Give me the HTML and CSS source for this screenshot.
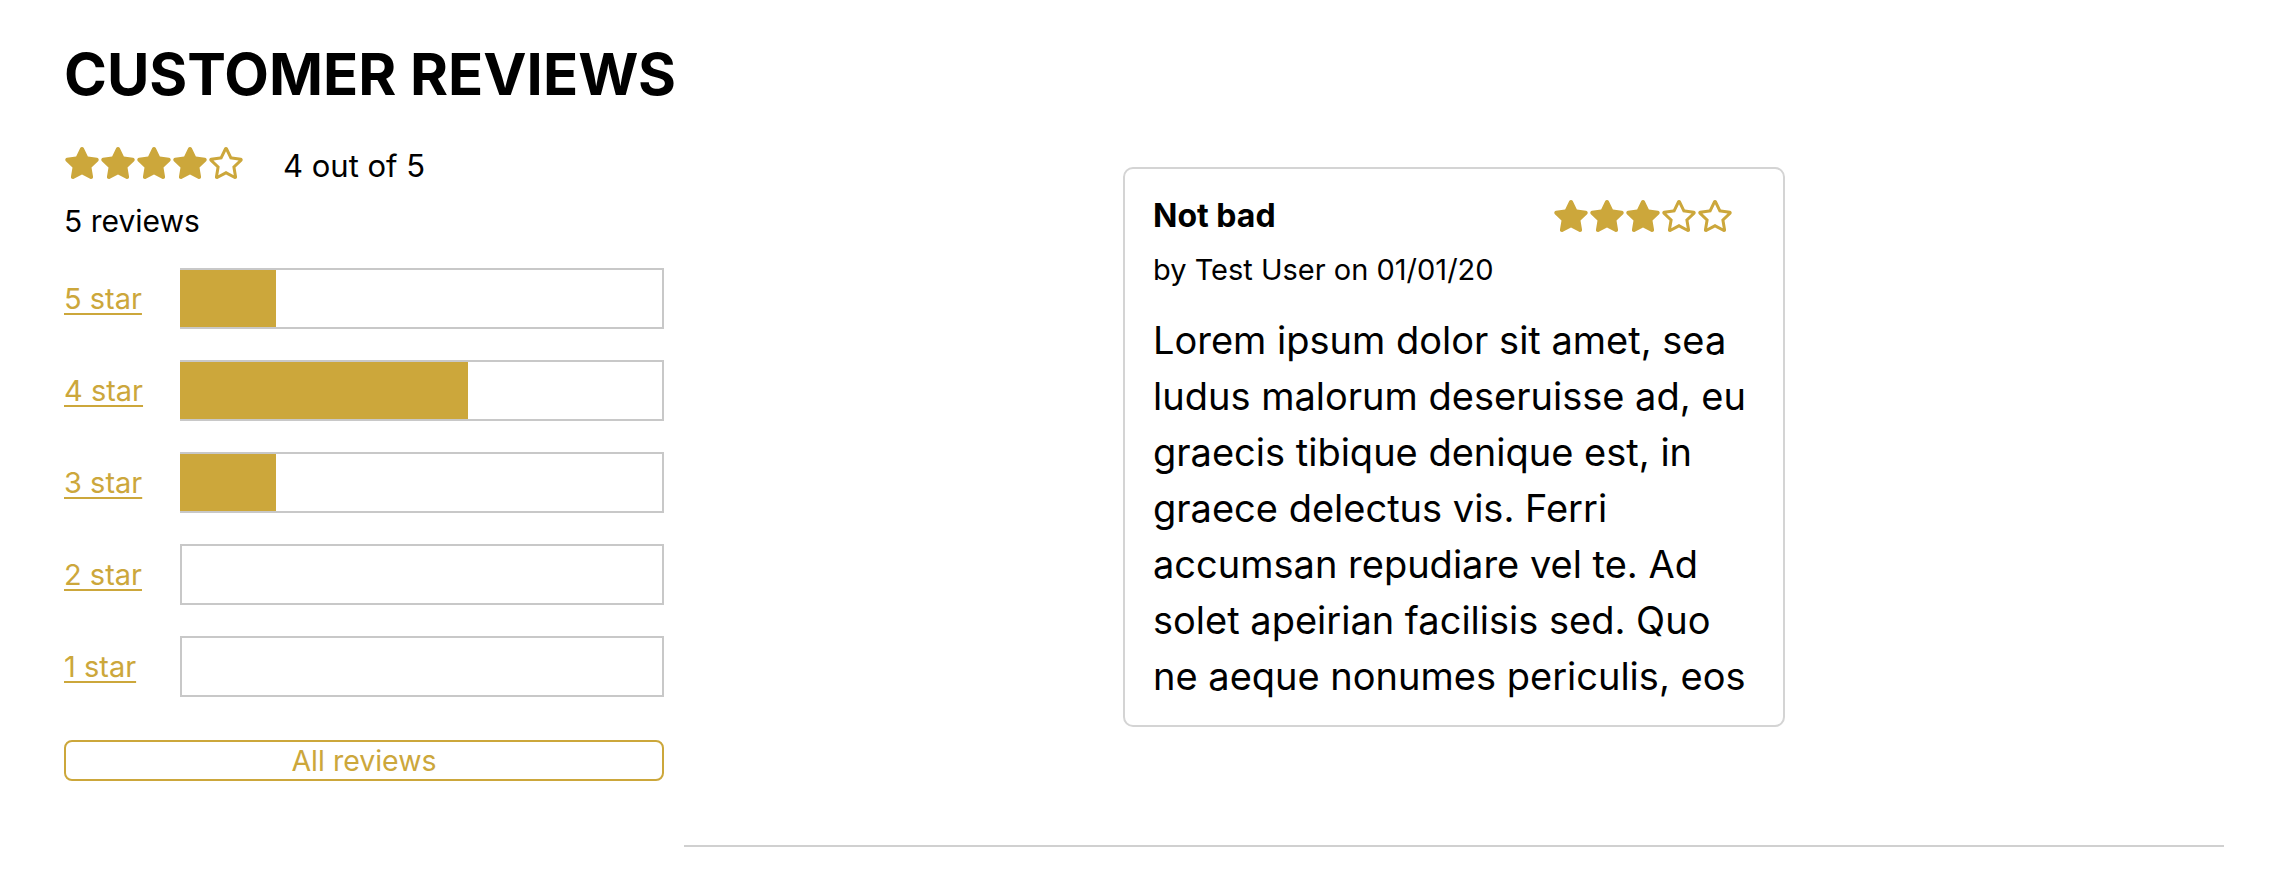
FILE: index.html
```html
<!DOCTYPE html>
<html lang="en">
<head>
<meta charset="utf-8">
<title>Customer Reviews</title>
<link rel="stylesheet" href="styles.css">
</head>
<body>
<svg class="defs" aria-hidden="true">
  <symbol id="star-full" viewBox="0 0 576 512"><path d="M259.3 17.8L194 150.2 47.9 171.5c-26.2 3.8-36.7 36.1-17.7 54.6l105.7 103-25 145.5c-4.5 26.3 23.2 46 46.4 33.7L288 439.6l130.7 68.7c23.2 12.2 50.9-7.4 46.4-33.7l-25-145.5 105.7-103c19-18.5 8.5-50.8-17.7-54.6L382 150.2 316.7 17.8c-11.7-23.6-45.6-23.9-57.4 0z"/></symbol>
  <symbol id="star-empty" viewBox="0 0 576 512"><path d="M528.1 171.5L382 150.2 316.7 17.8c-11.7-23.6-45.6-23.9-57.4 0L194 150.2 47.9 171.5c-26.2 3.8-36.7 36.1-17.7 54.6l105.7 103-25 145.5c-4.5 26.3 23.2 46 46.4 33.7L288 439.6l130.7 68.7c23.2 12.2 50.9-7.4 46.4-33.7l-25-145.5 105.7-103c19-18.5 8.5-50.8-17.7-54.6zM388.6 312.3l23.7 138.4L288 385.4l-124.3 65.3 23.7-138.4-100.6-98 139-20.2 62.2-126 62.2 126 139 20.2-100.6 98z"/></symbol>
</svg>
<div class="page">
  <h1 class="title">CUSTOMER REVIEWS</h1>
  <div class="main">
    <section class="summary">
      <div class="rating">
        <div class="stars">
          <svg class="star"><use href="#star-full"/></svg>
          <svg class="star"><use href="#star-full"/></svg>
          <svg class="star"><use href="#star-full"/></svg>
          <svg class="star"><use href="#star-full"/></svg>
          <svg class="star"><use href="#star-empty"/></svg>
        </div>
        <span class="rating-text">4 out of 5</span>
      </div>
      <div class="count">5 reviews</div>
      <ul class="bars">
        <li class="bar-row"><a class="bar-label" href="#">5 star</a><div class="bar"><div class="bar-fill" style="width:20%"></div></div></li>
        <li class="bar-row"><a class="bar-label" href="#">4 star</a><div class="bar"><div class="bar-fill" style="width:60%"></div></div></li>
        <li class="bar-row"><a class="bar-label" href="#">3 star</a><div class="bar"><div class="bar-fill" style="width:20%"></div></div></li>
        <li class="bar-row"><a class="bar-label" href="#">2 star</a><div class="bar"><div class="bar-fill" style="width:0%"></div></div></li>
        <li class="bar-row"><a class="bar-label" href="#">1 star</a><div class="bar"><div class="bar-fill" style="width:0%"></div></div></li>
      </ul>
      <button class="all-btn" type="button">All reviews</button>
    </section>
    <section class="reviews">
      <article class="card">
        <div class="card-head">
          <span class="card-title">Not bad</span>
          <div class="stars card-stars">
            <svg class="star"><use href="#star-full"/></svg>
            <svg class="star"><use href="#star-full"/></svg>
            <svg class="star"><use href="#star-full"/></svg>
            <svg class="star"><use href="#star-empty"/></svg>
            <svg class="star"><use href="#star-empty"/></svg>
          </div>
        </div>
        <div class="card-meta">by Test User on 01/01/20</div>
        <p class="card-body">Lorem ipsum dolor sit amet, sea ludus malorum deseruisse ad, eu graecis tibique denique est, in graece delectus vis. Ferri accumsan repudiare vel te. Ad solet apeirian facilisis sed. Quo ne aeque nonumes periculis, eos</p>
      </article>
      <hr class="divider">
    </section>
  </div>
</div>
</body>
</html>
```

FILE: styles.css
```css
html, body {
  margin: 0;
  padding: 0;
  background: #fff;
}

body {
  font-family: Inter, "Noto Sans", "Liberation Sans", sans-serif;
  color: #000;
}

.defs {
  display: none;
}

.page {
  padding: 38px 64px 0;
}

.title {
  margin: 0;
  font-size: 58px;
  line-height: 72px;
  font-weight: 700;
  white-space: nowrap;
}

.main {
  display: flex;
  align-items: flex-start;
  gap: 20px;
}

.summary {
  width: 600px;
  flex: none;
  display: flex;
  flex-direction: column;
}

.rating {
  display: flex;
  align-items: center;
  height: 32px;
  margin-top: 37px;
}

.stars {
  display: flex;
}

.star {
  display: block;
  width: 36px;
  height: 32px;
  fill: #cca73b;
}

.rating-text {
  margin-left: 39px;
  padding-top: 6px;
  font-size: 31px;
  line-height: 36px;
}

.count {
  margin-top: 24px;
  font-size: 30px;
  line-height: 36px;
}

.bars {
  list-style: none;
  margin: 29px 0 0;
  padding: 0;
  display: flex;
  flex-direction: column;
  gap: 31px;
}

.bar-row {
  display: flex;
  align-items: center;
  height: 61px;
}

.bar-label {
  width: 116px;
  flex: none;
  font-size: 29px;
  line-height: 36px;
  color: #cca73b;
  text-decoration: underline;
  text-decoration-thickness: 2px;
  text-underline-offset: 4px;
}

.bar {
  flex: 1;
  height: 61px;
  box-sizing: border-box;
  border: 2px solid #c8c8c8;
  display: flex;
}

.bar-fill {
  margin-left: -2px;
  background: #cca73b;
}

.all-btn {
  margin-top: 43px;
  width: 100%;
  height: 41px;
  padding: 1px 0 0;
  border: 2px solid #cca73b;
  border-radius: 8px;
  background: #fff;
  color: #cca73b;
  font-family: Inter, "Noto Sans", sans-serif;
  font-size: 28.5px;
  line-height: 34px;
}

.reviews {
  flex: 1;
  display: flex;
  flex-direction: column;
  align-items: center;
}

.card {
  margin-top: 57px;
  width: 662px;
  height: 560px;
  box-sizing: border-box;
  border: 2px solid #d4d4d4;
  border-radius: 10px;
  padding: 31px 28px 0;
  overflow: hidden;
}

.card-head {
  display: flex;
  align-items: center;
  justify-content: space-between;
  height: 32px;
}

.card-title {
  font-size: 32px;
  line-height: 36px;
  font-weight: 700;
}

.card-stars {
  margin-right: 22px;
}

.card-meta {
  margin-top: 21px;
  font-size: 29px;
  line-height: 34px;
}

.card-body {
  margin: 25px 0 0;
  font-size: 38px;
  line-height: 56px;
  max-height: 392px;
  overflow: hidden;
}

.divider {
  align-self: stretch;
  margin: 118px 0 0;
  border: 0;
  height: 2px;
  background: #d0d0d0;
}
```
